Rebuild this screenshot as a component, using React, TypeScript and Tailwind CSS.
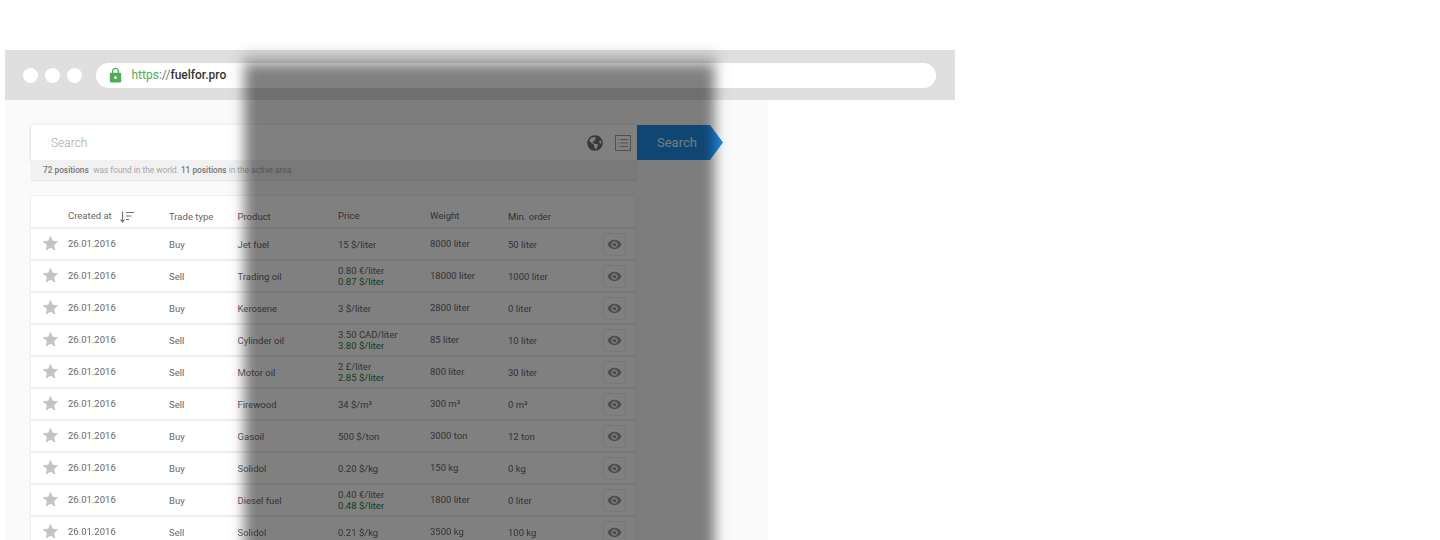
import React from 'react';
import { FaGlobeAmericas } from 'react-icons/fa';
import { MdLock, MdStar, MdVisibility } from 'react-icons/md';

type Row = {
  type: string;
  product: string;
  price: string;
  converted?: string;
  weight: string;
  min: string;
};

const rows: Row[] = [
  { type: 'Buy', product: 'Jet fuel', price: '15 $/liter', weight: '8000 liter', min: '50 liter' },
  { type: 'Sell', product: 'Trading oil', price: '0.80 €/liter', converted: '0.87 $/liter', weight: '18000 liter', min: '1000 liter' },
  { type: 'Buy', product: 'Kerosene', price: '3 $/liter', weight: '2800 liter', min: '0 liter' },
  { type: 'Sell', product: 'Cylinder oil', price: '3.50 CAD/liter', converted: '3.80 $/liter', weight: '85 liter', min: '10 liter' },
  { type: 'Sell', product: 'Motor oil', price: '2 £/liter', converted: '2.85 $/liter', weight: '800 liter', min: '30 liter' },
  { type: 'Sell', product: 'Firewood', price: '34 $/m³', weight: '300 m³', min: '0 m³' },
  { type: 'Buy', product: 'Gasoil', price: '500 $/ton', weight: '3000 ton', min: '12 ton' },
  { type: 'Buy', product: 'Solidol', price: '0.20 $/kg', weight: '150 kg', min: '0 kg' },
  { type: 'Buy', product: 'Diesel fuel', price: '0.40 €/liter', converted: '0.48 $/liter', weight: '1800 liter', min: '0 liter' },
  { type: 'Sell', product: 'Solidol', price: '0.21 $/kg', weight: '3500 kg', min: '100 kg' },
];

function BrowserBar() {
  return (
    <div className="flex h-[50px] w-[950px] items-center bg-[#dfdfdf] pl-[18px]">
      <div className="flex gap-[7px]">
        <span className="h-[15px] w-[15px] rounded-full bg-white" />
        <span className="h-[15px] w-[15px] rounded-full bg-white" />
        <span className="h-[15px] w-[15px] rounded-full bg-white" />
      </div>
      <div className="ml-[14px] flex h-[25px] w-[840px] items-center rounded-full bg-white pl-[11px] text-[12px]">
        <MdLock className="h-[17px] w-[17px] text-[#4caf50]" />
        <span className="ml-[7.5px] text-[#4caf50]">https</span>
        <span className="text-[#757575]">://</span>
        <span className="font-medium text-[#333333]">fuelfor.pro</span>
      </div>
    </div>
  );
}

function SearchPanel() {
  return (
    <div className="ml-[26px] flex pt-[25px]">
      <div className="w-[606px]">
        <div className="flex h-[35px] items-center justify-between bg-white pl-[20px] pr-[6px] shadow-[0_1px_3px_rgba(0,0,0,0.2)]">
          <span className="text-[12px] font-light text-[#a8a8a8]">Search</span>
          <div className="flex items-center gap-[12px]">
            <FaGlobeAmericas className="h-[16px] w-[16px] text-[#707070]" />
            <svg width="16" height="16" viewBox="0 0 16 16" fill="none" stroke="#a0a0a0">
              <rect x="0.5" y="0.5" width="15" height="15" />
              <path d="M3 4.5h1M3 8h1M3 11.5h1M5.5 4.5H13M5.5 8H13M5.5 11.5H13" />
            </svg>
          </div>
        </div>
        <div className="flex h-[20px] items-center bg-[#f1f1f1] pl-[12px] pt-[1px] text-[8.3px] text-[#a8a8a8] shadow-[0_1px_1px_rgba(0,0,0,0.08)]">
          <span className="font-medium text-[#757575]">72 positions</span>
          <span className="ml-[4.5px]">was found in the world.</span>
          <span className="ml-[2px] font-medium text-[#757575]">11 positions</span>
          <span className="ml-[2px]">in the active area.</span>
        </div>
      </div>
      <div className="flex h-[35px] w-[86px] items-center bg-[#1f8ae6] pl-[20px] text-[13px] text-[#e3f6ff] [clip-path:polygon(0_0,73px_0,100%_50%,73px_100%,0_100%)]">
        Search
      </div>
    </div>
  );
}

function TableHeader() {
  return (
    <div className="flex h-[31px] items-center pt-[10px] text-[9.5px] text-[#666666]">
      <div className="ml-[37px] flex w-[101px] items-center">
        <span>Created at</span>
        <svg className="ml-[7px]" width="15" height="12" viewBox="0 0 15 12" fill="none" stroke="#757575" strokeWidth="1.2">
          <path d="M3.5 0.5v10M1.5 8.5l2 2.5 2-2.5" />
          <path d="M7 1.5h8M7 5h5.5M7 8.5h3" />
        </svg>
      </div>
      <div className="w-[68.5px] pt-[1px]">Trade type</div>
      <div className="w-[100.5px] pt-[1px]">Product</div>
      <div className="w-[92px]">Price</div>
      <div className="w-[78px]">Weight</div>
      <div className="pt-[1px]">Min. order</div>
    </div>
  );
}

function TableRow({ row }: { row: Row }) {
  return (
    <div className="flex h-[32px] items-center border-t-2 border-[#eeeeee] text-[9.5px] text-[#666666]">
      <MdStar className="mb-[2px] ml-[10px] h-[19px] w-[19px] text-[#c4c4c4]" />
      <div className="ml-[8px] w-[101px]">26.01.2016</div>
      <div className="w-[68.5px] pt-[2px]">{row.type}</div>
      <div className="w-[100.5px] pt-[2px] [font-weight:450]">{row.product}</div>
      <div className="w-[92px] leading-[11px]">
        <div>{row.price}</div>
        {row.converted && <div className="text-[#2e7d32] [font-weight:450]">{row.converted}</div>}
      </div>
      <div className="w-[78px]">{row.weight}</div>
      <div className="w-[95px] pt-[2px]">{row.min}</div>
      <div className="flex h-[23px] w-[23px] items-center justify-center rounded-[4px] border border-[#eeeeee]">
        <MdVisibility className="h-[15px] w-[15px] text-[#9a9a9a]" />
      </div>
    </div>
  );
}

export default function App() {
  return (
    <div className="relative h-[540px] w-[1440px] overflow-hidden bg-white font-['Roboto',sans-serif]">
      <div className="pl-[5px] pt-[50px] opacity-[0.99] blur-[0.4px]">
        <BrowserBar />
        <div className="h-[440px] w-[763px] bg-[#fafafa]">
          <SearchPanel />
          <div className="ml-[26px] mt-[16px] w-[604px] bg-white shadow-[0_0_2px_rgba(0,0,0,0.12)]">
            <TableHeader />
            {rows.map((row, i) => (
              <TableRow key={i} row={row} />
            ))}
          </div>
        </div>
      </div>
      {/* dark band across the page, soft edges */}
      <div className="absolute left-[242px] top-[54px] h-[520px] w-[475px] bg-black/20 blur-[7px]" />
      <div className="absolute left-[246px] top-[66px] h-[500px] w-[467px] bg-black/[0.375] blur-[6px]" />
    </div>
  );
}
